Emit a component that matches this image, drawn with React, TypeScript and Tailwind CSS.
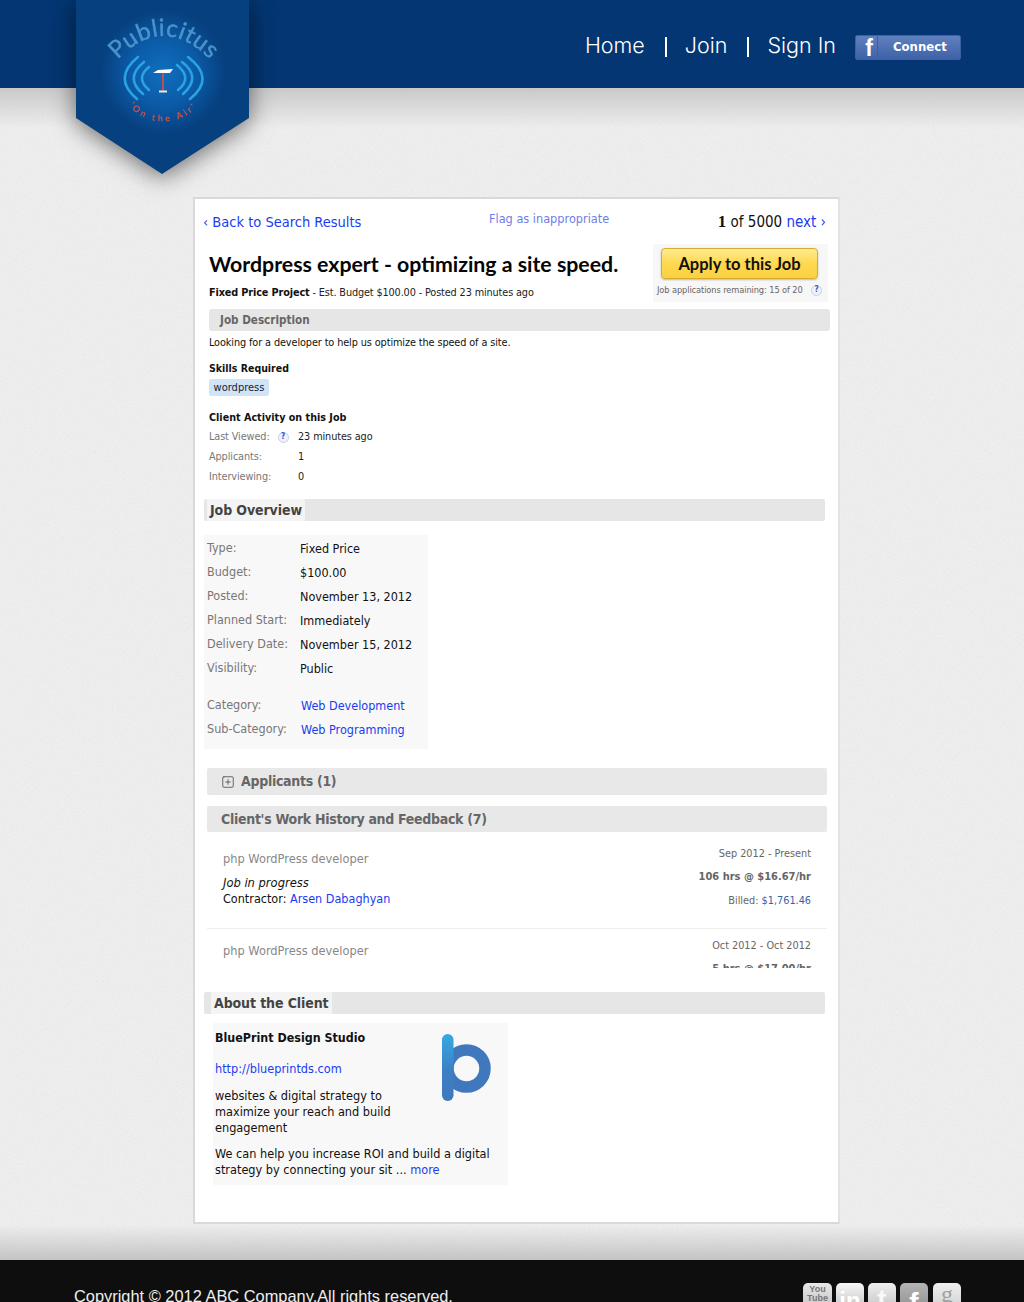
import { SquarePlus } from "lucide-react";

function Help() {
  return (
    <span className="flex h-[11px] w-[11px] items-center justify-center rounded-full border border-[#c5d0ee] bg-[#eef2fc] text-[8px] font-bold leading-none text-[#3a55c8]">
      ?
    </span>
  );
}

function Logo() {
  return (
    <div className="absolute left-[76px] top-0 z-10 drop-shadow-[0_4px_12px_rgba(0,0,0,0.55)]">
      <svg width="173" height="174" viewBox="76 0 173 174">
        <defs>
          <radialGradient id="glow" cx="163" cy="72" r="62" gradientUnits="userSpaceOnUse">
            <stop offset="0" stopColor="#0f6fbe" />
            <stop offset="0.55" stopColor="#0b5aa6" />
            <stop offset="1" stopColor="#07407f" />
          </radialGradient>
          <path id="logoTop" d="M112 66 Q163 6 216 66" />
          <path id="logoBottom" d="M129 105 C144 127 182 127 198 105" />
        </defs>
        <polygon points="76,0 249,0 249,118 162,174 76,118" fill="url(#glow)" />
        <text fontFamily="Lato, sans-serif" fontSize="24" fill="#4a94cc" stroke="#4a94cc" strokeWidth="0.4" textAnchor="middle" letterSpacing="0.5">
          <textPath href="#logoTop" startOffset="50%">Publicitus</textPath>
        </text>
        <g fill="none" stroke="#29a3e3" strokeWidth="2.6" strokeLinecap="round">
          <path d="M138 57 Q112 78 137 99" />
          <path d="M144 62 Q124 78 143 94" />
          <path d="M149 67 Q135 78 149 90" />
          <path d="M188 57 Q216 78 190 99" />
          <path d="M182 62 Q202 77 183 94" />
          <path d="M177 65 Q193 78 178 90" />
        </g>
        <polygon points="153,73 158,70 173,69 170,73" fill="#ffffff" />
        <rect x="162" y="73" width="2" height="18" fill="#c0504d" />
        <rect x="159" y="90.500" width="8" height="2" fill="#f1e6e0" />
        <text fontFamily="Lato, sans-serif" fontSize="9" fontWeight="700" fill="#c9544f" textAnchor="middle" letterSpacing="2.800">
          <textPath href="#logoBottom" startOffset="50%">'On the Air'</textPath>
        </text>
      </svg>
    </div>
  );
}

function Header() {
  return (
    <header className="flex h-[88px] items-start justify-end bg-[#033672] pr-[63px] pt-[33px]">
      <nav className="flex items-start font-['Inter'] text-[21.500px] font-light leading-[24px] text-white">
        <a>Home</a>
        <span className="ml-[20px] mr-[18px] mt-[4px] h-[20px] w-[2px] bg-white" />
        <a>Join</a>
        <span className="ml-[20px] mr-[18px] mt-[4px] h-[20px] w-[2px] bg-white" />
        <a>Sign In</a>
      </nav>
      <div className="ml-[19px] mt-[2px] flex h-[25px] w-[106px] items-stretch rounded-[2px] border border-[#3b5fa8] bg-gradient-to-b from-[#5f80bf] to-[#3f62a8] text-white">
        <span className="flex w-[22px] items-end justify-center border-r border-[#3b5fa8] pl-[5px] font-['Liberation_Sans'] text-[23px] font-bold leading-[21px]">
          f
        </span>
        <span className="flex-1 pl-[15px] font-['DejaVu_Sans_Condensed'] text-[13px] font-bold leading-[22px]">
          Connect
        </span>
      </div>
    </header>
  );
}

function InfoRow({ label, value }: { label: string; value: string }) {
  return (
    <div className="flex h-[24px] items-center">
      <span className="w-[93px] text-[#777]">{label}</span>
      <span className="pt-[2px] text-[#111]">{value}</span>
    </div>
  );
}

function LinkRow({ label, value }: { label: string; value: string }) {
  return (
    <div className="flex h-[24px] items-center">
      <span className="w-[94px] text-[#777]">{label}</span>
      <a className="pt-[2px] text-[#1a3cf0]">{value}</a>
    </div>
  );
}

function ActivityRow({ label, value, help }: { label: string; value: string; help?: boolean }) {
  return (
    <div className="flex h-[20px] items-center text-[10.800px] tracking-[-0.1px]">
      <span className="flex w-[89px] items-center gap-[8px] text-[#777]">
        {label}
        {help && <Help />}
      </span>
      <span className="pt-[1px] text-[#222]">{value}</span>
    </div>
  );
}

function HeadingBar({ title, inset }: { title: string; inset: string }) {
  return (
    <div className={`mr-[13px] flex h-[22px] items-stretch rounded-[2px] bg-[#e6e6e6] ${inset}`}>
      <h3 className="bg-[#f4f4f4] px-[3px] text-[14px] font-bold leading-[23px] tracking-[-0.1px] text-[#444]">{title}</h3>
    </div>
  );
}

function JobCard() {
  return (
    <main className="ml-[193px] mt-[109px] h-[1027px] w-[647px] border-2 border-[#d9d9d9] border-r-[#e2e2e2] bg-white font-['DejaVu_Sans_Condensed','Noto_Sans',sans-serif] text-[#111]">
      <div className="flex h-[45px] items-start pl-[8px] pr-[12px] pt-[13px]">
        <a className="w-[286px] text-[14.500px] leading-[20px] text-[#1a3cf0]">‹ Back to Search Results</a>
        <a className="mt-[-3px] w-[225px] text-[12.600px] leading-[20px] text-[#6e80e6]">Flag as inappropriate</a>
        <span className="flex-1 whitespace-nowrap text-right text-[15px] leading-[20px] text-[#111]">
          <b className="font-['Liberation_Serif'] text-[17px]">1</b> of 5000 <a className="text-[#1a3cf0]">next ›</a>
        </span>
      </div>

      <div className="flex pl-[14px] pr-[10px]">
        <div className="flex-1">
          <h1 className="mt-[7px] font-['Lato'] text-[21.300px] font-bold leading-[26px] text-[#050505]">
            Wordpress expert - optimizing a site speed.
          </h1>
          <p className="mt-[8px] text-[10.800px] leading-[16px] tracking-[-0.13px] text-[#222]">
            <b className="text-[#111]">Fixed Price Project</b> - Est. Budget $100.00 - Posted 23 minutes ago
          </p>
        </div>
        <div className="h-[58px] w-[175px] bg-[#f7f7f7] px-[4px] pt-[4px]">
          <button className="ml-[4px] h-[31px] w-[157px] rounded-[4px] border border-[#d9ab2c] bg-gradient-to-b from-[#fdeb8d] via-[#ffd84f] to-[#fbd142] font-['Lato'] text-[16.500px] font-bold leading-[28px] text-[#111] shadow-[0_1px_2px_rgba(0,0,0,0.25)]">
            Apply to this Job
          </button>
          <div className="mt-[5px] flex items-center justify-between whitespace-nowrap pr-[2px] text-[9.200px] leading-[12px] tracking-[-0.1px] text-[#666]">
            <span>Job applications remaining: 15 of 20</span>
            <Help />
          </div>
        </div>
      </div>

      <div className="ml-[14px] mr-[8px] mt-[7px] h-[22px] rounded-[3px] bg-[#e6e6e6] pl-[11px] text-[11.600px] font-bold leading-[22px] text-[#666]">
        Job Description
      </div>

      <div className="pl-[14px]">
        <p className="mt-[5px] text-[10.800px] leading-[14px] tracking-[-0.1px]">Looking for a developer to help us optimize the speed of a site.</p>
        <h4 className="mt-[11px] text-[10.500px] font-bold leading-[14px]">Skills Required</h4>
        <span className="mt-[4px] block h-[17px] w-[60px] rounded-[2px] bg-[#cfe4f7] text-center text-[11px] leading-[17px] text-[#223]">
          wordpress
        </span>
        <h4 className="mt-[15px] text-[10.700px] font-bold leading-[14px]">Client Activity on this Job</h4>
        <div className="mt-[2px]">
          <ActivityRow label="Last Viewed:" value="23 minutes ago" help />
          <ActivityRow label="Applicants:" value="1" />
          <ActivityRow label="Interviewing:" value="0" />
        </div>
      </div>

      <div className="mt-[12px] pl-[9px]">
        <HeadingBar title="Job Overview" inset="pl-[3px]" />
      </div>

      <section className="ml-[9px] mt-[14px] h-[214px] w-[224px] bg-[#f8f8f8] pl-[3px] pt-[1px] text-[12.500px]">
        <InfoRow label="Type:" value="Fixed Price" />
        <InfoRow label="Budget:" value="$100.00" />
        <InfoRow label="Posted:" value="November 13, 2012" />
        <InfoRow label="Planned Start:" value="Immediately" />
        <InfoRow label="Delivery Date:" value="November 15, 2012" />
        <InfoRow label="Visibility:" value="Public" />
        <div className="mt-[13px]">
          <LinkRow label="Category:" value="Web Development" />
          <LinkRow label="Sub-Category:" value="Web Programming" />
        </div>
      </section>

      <div className="ml-[12px] mt-[19px] flex h-[27px] w-[620px] items-center rounded-[2px] bg-[#e8e8e8] pl-[14px] text-[14px] font-bold tracking-[-0.3px] text-[#666]">
        <SquarePlus size={14} strokeWidth={1.500} className="mr-[6px] text-[#555]" />
        Applicants (1)
      </div>
      <div className="ml-[12px] mt-[11px] h-[26px] w-[620px] rounded-[2px] bg-[#e8e8e8] pl-[14px] text-[14px] font-bold leading-[26px] tracking-[-0.3px] text-[#666]">
        Client's Work History and Feedback (7)
      </div>

      <section className="ml-[12px] h-[136px] w-[620px] overflow-hidden">
        <div className="flex h-[97px] justify-between border-b border-[#eeeeee] pl-[16px] pr-[16px] pt-[15px]">
          <div>
            <p className="text-[12.700px] leading-[24px] text-[#888]">php WordPress developer</p>
            <p className="mt-[4px] text-[12.800px] italic leading-[16px]">Job in progress</p>
            <p className="text-[12.500px] leading-[16px]">
              Contractor: <a className="text-[#1a3cf0]">Arsen Dabaghyan</a>
            </p>
          </div>
          <div className="text-right text-[10.800px] leading-[14px] text-[#666]">
            <p>Sep 2012 - Present</p>
            <p className="mt-[9px] text-[11px] font-bold">106 hrs @ $16.67/hr</p>
            <p className="mt-[10px]">
              Billed: <span className="text-[#3a5fa8]">$1,761.46</span>
            </p>
          </div>
        </div>
        <div className="flex justify-between pl-[16px] pr-[16px] pt-[10px]">
          <p className="text-[12.700px] leading-[24px] text-[#888]">php WordPress developer</p>
          <div className="text-right text-[10.800px] leading-[14px] text-[#666]">
            <p>Oct 2012 - Oct 2012</p>
            <p className="mt-[9px] text-[11px] font-bold">5 hrs @ $17.00/hr</p>
          </div>
        </div>
      </section>

      <div className="mt-[24px] pl-[9px]">
        <HeadingBar title="About the Client" inset="pl-[7px]" />
      </div>

      <section className="relative ml-[18px] mt-[9px] h-[162px] w-[295px] bg-[#f8f8f8] pl-[2px] pt-[7px] text-[12.600px] leading-[16px]">
        <h4 className="text-[12.400px] font-bold">BluePrint Design Studio</h4>
        <a className="mt-[15px] block text-[#1a3cf0]">http://blueprintds.com</a>
        <p className="mt-[11px] w-[190px]">websites &amp; digital strategy to maximize your reach and build engagement</p>
        <p className="mt-[10px]">
          We can help you increase ROI and build a digital strategy by connecting your sit ... <a className="text-[#1a3cf0]">more</a>
        </p>
        <svg className="absolute left-[229px] top-[11px]" width="49" height="67" viewBox="0 0 49 67">
          <defs>
            <linearGradient id="stem" x1="0" y1="0" x2="0" y2="1">
              <stop offset="0" stopColor="#34aae2" />
              <stop offset="0.55" stopColor="#3d7fc4" />
              <stop offset="1" stopColor="#3f78bd" />
            </linearGradient>
          </defs>
          <circle cx="24.500" cy="34.500" r="18.500" fill="none" stroke="#3f78bd" strokeWidth="11.500" />
          <rect x="0" y="0" width="11.500" height="67" rx="5.700" fill="url(#stem)" />
        </svg>
      </section>
    </main>
  );
}

function SocialTile({ children, className }: { children: React.ReactNode; className: string }) {
  return (
    <span className={`flex h-[40px] w-[28px] justify-center overflow-hidden rounded-[5px] font-['Liberation_Sans'] font-bold ${className}`}>
      {children}
    </span>
  );
}

function Footer() {
  return (
    <footer className="mt-[36px] flex h-[42px] justify-between overflow-hidden bg-[#0e0e0e] pl-[74px] pr-[63px]">
      <p className="pt-[26px] font-['Liberation_Sans'] text-[16.400px] leading-[20px] text-[#eeeeee]">
        Copyright © 2012 ABC Company.All rights reserved.
      </p>
      <div className="flex gap-[4px] pt-[23px]">
        <SocialTile className="!w-[29px] bg-gradient-to-b from-[#e8e8e8] to-[#b0b0b0] text-center text-[9px] leading-[9px] text-[#777]">
          <span className="pt-[2px]">You<br />Tube</span>
        </SocialTile>
        <SocialTile className="bg-gradient-to-b from-[#f8f8f8] to-[#a8a8a8] text-[24px] leading-[36px] text-white">in</SocialTile>
        <SocialTile className="bg-gradient-to-b from-[#eeeeee] to-[#b0b0b0] text-[28px] leading-[34px] text-[#f8f8f8]">t</SocialTile>
        <SocialTile className="bg-gradient-to-b from-[#b4b4b4] to-[#808080] text-[28px] leading-[40px] text-white">f</SocialTile>
        <SocialTile className="ml-[1px] bg-gradient-to-b from-[#f0f0f0] to-[#c0c0c0] font-['Liberation_Serif'] text-[24px] !font-normal leading-[22px] text-[#a0a0a0]">g</SocialTile>
      </div>
    </footer>
  );
}

export default function App() {
  return (
    <div className="relative h-[1302px] w-[1024px] overflow-hidden bg-[#f1f1f1]">
      {/* paper grain and the soft bands the page image has under the header and above the footer */}
      <svg className="pointer-events-none absolute inset-0 opacity-[0.16]" width="1024" height="1302">
        <filter id="grain">
          <feTurbulence type="fractalNoise" baseFrequency="0.9" numOctaves="2" />
          <feColorMatrix type="saturate" values="0" />
        </filter>
        <rect width="1024" height="1302" filter="url(#grain)" />
      </svg>
      <div className="pointer-events-none absolute inset-x-0 top-[88px] h-[40px] bg-gradient-to-b from-[#c9c9c9] to-transparent" />
      <div className="pointer-events-none absolute inset-x-0 top-[1225px] h-[35px] bg-gradient-to-b from-transparent to-[#c4c4c4]" />
      <div className="relative">
        <Logo />
        <Header />
        <JobCard />
        <Footer />
      </div>
    </div>
  );
}
